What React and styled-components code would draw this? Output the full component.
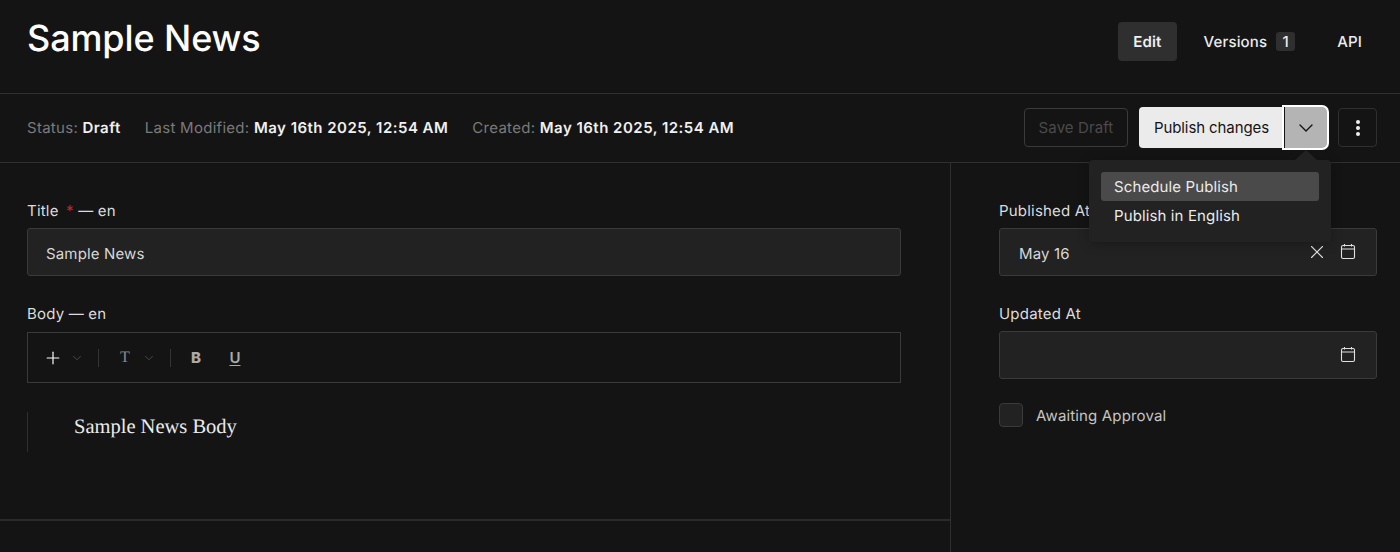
import React from "react";
import styled, { createGlobalStyle } from "styled-components";
import { Plus, ChevronDown, X } from "lucide-react";

const Global = createGlobalStyle`
  html, body { margin: 0; padding: 0; background: #141414; }
  body { font-family: Inter, "Liberation Sans", sans-serif; color: #fff; -webkit-font-smoothing: antialiased; text-rendering: geometricPrecision; }
  * { box-sizing: border-box; }
`;

const Page = styled.div`
  width: 1400px;
  height: 552px;
  overflow: hidden;
  background: #141414;
  display: flex;
  flex-direction: column;
`;

const Header = styled.header`
  height: 94px;
  flex: none;
  border-bottom: 1px solid #2f2f2f;
  padding: 16px 23px 0 27px;
  display: flex;
  justify-content: space-between;
  align-items: flex-start;
`;

const PageTitle = styled.h1`
  margin: 0;
  font-size: 36px;
  line-height: 45px;
  font-weight: 500;
  color: #fff;
  letter-spacing: -0.1px;
`;

const Tabs = styled.nav`
  display: flex;
  align-items: center;
  gap: 12px;
  margin-top: 6px;
`;

const Tab = styled.div`
  height: 39px;
  padding: 0 15px;
  display: flex;
  align-items: center;
  gap: 9px;
  font-size: 15px;
  letter-spacing: 0.15px;
  font-weight: ${(p) => (p.$active ? 600 : 500)};
  border-radius: 4px;
  color: ${(p) => (p.$active ? "#f0f0f0" : "#ebebeb")};
  background: ${(p) => (p.$active ? "#2f2f2f" : "transparent")};
`;

const Count = styled.span`
  width: 19px;
  height: 19px;
  border-radius: 3px;
  background: #2f2f2f;
  display: flex;
  align-items: center;
  justify-content: center;
  font-size: 15px;
`;

const MetaBar = styled.div`
  height: 69px;
  flex: none;
  border-bottom: 1px solid #2f2f2f;
  padding: 0 23px 1px 27px;
  display: flex;
  justify-content: space-between;
  align-items: center;
`;

const MetaList = styled.div`
  display: flex;
  gap: 24px;
  font-size: 15px;
  letter-spacing: 0.28px;
`;

const MetaItem = styled.div`
  color: #7a7a7a;
  b { color: #f0f0f0; font-weight: 600; letter-spacing: 0.48px; }
`;

const Actions = styled.div`
  position: relative;
  display: flex;
  align-items: center;
`;

const SaveButton = styled.button`
  width: 104px;
  height: 39px;
  background: transparent;
  border: 1px solid #3a3a3a;
  border-radius: 4px;
  color: #4a4a4a;
  font: 400 15px Inter, sans-serif;
  letter-spacing: 0.1px;
  margin-right: 11px;
  padding: 0;
`;

const PublishButton = styled.button`
  width: 145px;
  height: 41px;
  background: #ebebeb;
  color: #141414;
  border: 0;
  border-radius: 4px 0 0 4px;
  font: 400 15px Inter, sans-serif;
  letter-spacing: -0.1px;
  padding: 0;
`;

const Caret = styled.button`
  width: 43px;
  height: 41px;
  background: #b4b4b4;
  color: #141414;
  border: 0;
  border-left: 1px solid #141414;
  border-radius: 0 5px 5px 0;
  box-shadow: 0 0 0 2px #fff;
  display: flex;
  align-items: center;
  justify-content: center;
  padding: 0;
  position: relative;
  z-index: 1;
`;

const MoreButton = styled.button`
  width: 39px;
  height: 39px;
  margin-left: 11px;
  background: transparent;
  border: 1px solid #2f2f2f;
  border-radius: 4px;
  display: flex;
  align-items: center;
  justify-content: center;
  flex-direction: column;
  gap: 2px;
  padding: 0;
`;

const Dot = styled.span`
  width: 4px;
  height: 4px;
  border-radius: 50%;
  background: #f0f0f0;
`;

const Popup = styled.div`
  position: absolute;
  top: 53px;
  left: 65px;
  width: 242px;
  height: 82px;
  background: #222;
  border-radius: 4px;
  padding: 12px;
  z-index: 5;
  box-shadow: 0 2px 12px rgba(0,0,0,0.25);
  &::before {
    content: "";
    position: absolute;
    top: -10px;
    left: 206px;
    border: 11px solid transparent;
    border-top: 0;
    border-bottom: 10px solid #222;
  }
`;

const PopupItem = styled.div`
  height: 29px;
  padding: 0 13px;
  display: flex;
  align-items: center;
  font-size: 15px;
  letter-spacing: 0.12px;
  color: #ebebeb;
  border-radius: 3px;
  background: ${(p) => (p.$active ? "#4a4a4a" : "transparent")};
`;

const Main = styled.main`
  flex: 1;
  display: grid;
  grid-template-columns: 951px 1fr;
  min-height: 0;
`;

const LeftPane = styled.section`
  border-right: 1px solid #2f2f2f;
  padding-top: 38px;
  display: flex;
  flex-direction: column;
`;

const LeftFields = styled.div`
  padding: 0 49px 0 27px;
  height: 320px;
  border-bottom: 2px solid #2a2a2a;
`;

const RightPane = styled.aside`
  padding: 38px 23px 0 48px;
`;

const Field = styled.div`
  margin-bottom: ${(p) => p.$mb ?? 28}px;
`;

const Label = styled.label`
  display: block;
  height: 20px;
  line-height: 20px;
  font-size: 15px;
  letter-spacing: 0.2px;
  color: #dcdcdc;
  margin-bottom: ${(p) => p.$mb ?? 7}px;
  em { color: #c0282d; font-style: normal; margin: 0 0 0 3px; }
`;

const Input = styled.div`
  height: 48px;
  background: #222;
  border: 1px solid #3a3a3a;
  border-radius: 3px;
  padding: 0 20px 0 ${(p) => p.$pl ?? 19}px;
  display: flex;
  align-items: center;
  justify-content: space-between;
  font-size: 15px;
  letter-spacing: 0.15px;
  color: #d8d8d8;
`;

const InputValue = styled.span`
  padding-top: 2px;
`;

const InputIcons = styled.div`
  display: flex;
  align-items: center;
  gap: 12px;
  margin-left: auto;
  color: #e0e0e0;
  padding-bottom: 1px;
`;

const Toolbar = styled.div`
  height: 51px;
  border: 1px solid #3a3a3a;
  display: flex;
  align-items: center;
  padding-left: 15px;
`;

const ToolGroup = styled.div`
  display: flex;
  align-items: center;
  gap: ${(p) => p.$gap ?? 7}px;
`;

const Separator = styled.span`
  width: 1px;
  height: 18px;
  background: #333;
  margin: 0 ${(p) => p.$r}px 0 14px;
`;

const SerifT = styled.span`
  font-family: "Liberation Serif", serif;
  font-size: 16px;
  color: #8a8a8a;
  width: 12px;
  text-align: center;
`;

const MarkText = styled.span`
  width: 16px;
  text-align: center;
  font-size: 15px;
  font-weight: ${(p) => (p.$underline ? 600 : 800)};
  color: #aaa;
  text-decoration: ${(p) => (p.$underline ? "underline" : "none")};
  text-underline-offset: 2px;
`;

const Editor = styled.div`
  margin-top: 29px;
  height: 40px;
  border-left: 1px solid #2f2f2f;
  padding: 3px 0 0 46px;
  font-family: "Liberation Serif", serif;
  font-size: 20.5px;
  line-height: 24px;
  color: #ebebeb;
`;

const CheckRow = styled.div`
  display: flex;
  align-items: center;
  gap: 13px;
  font-size: 15px;
  letter-spacing: 0.15px;
  color: #c4c4c4;
  margin-top: 24px;
`;

const CheckText = styled.span`
  padding-top: 1px;
`;

const Check = styled.span`
  width: 24px;
  height: 24px;
  background: #222;
  border: 1px solid #3a3a3a;
  border-radius: 4px;
`;

const CalIcon = () => (
  <svg width="16" height="17" viewBox="0 0 16 17" fill="none" stroke="currentColor" strokeWidth="1.1">
    <rect x="1.5" y="2.5" width="13" height="13" rx="1.5" />
    <path d="M1.5 6h13M4.5 1v2.5M11.5 1v2.5" />
  </svg>
);

const Chevron = () => <ChevronDown size={14} strokeWidth={1.5} color="#4f4f4f" />;

export default function App() {
  return (
    <Page>
      <Global />
      <Header>
        <PageTitle>Sample News</PageTitle>
        <Tabs>
          <Tab $active>Edit</Tab>
          <Tab>Versions <Count>1</Count></Tab>
          <Tab>API</Tab>
        </Tabs>
      </Header>
      <MetaBar>
        <MetaList>
          <MetaItem>Status: <b>Draft</b></MetaItem>
          <MetaItem>Last Modified: <b>May 16th 2025, 12:54 AM</b></MetaItem>
          <MetaItem>Created: <b>May 16th 2025, 12:54 AM</b></MetaItem>
        </MetaList>
        <Actions>
          <SaveButton>Save Draft</SaveButton>
          <PublishButton>Publish changes</PublishButton>
          <Caret><ChevronDown size={24} strokeWidth={1.4} /></Caret>
          <MoreButton><Dot /><Dot /><Dot /></MoreButton>
          <Popup>
            <PopupItem $active>Schedule Publish</PopupItem>
            <PopupItem>Publish in English</PopupItem>
          </Popup>
        </Actions>
      </MetaBar>
      <Main>
        <LeftPane>
          <LeftFields>
            <Field>
              <Label>Title <em>*</em> — en</Label>
              <Input $pl={18}><InputValue>Sample News</InputValue></Input>
            </Field>
            <Field>
              <Label $mb={8}>Body — en</Label>
              <Toolbar>
                <ToolGroup>
                  <Plus size={20} strokeWidth={1.4} color="#fff" />
                  <Chevron />
                </ToolGroup>
                <Separator $r={20} />
                <ToolGroup $gap={11}>
                  <SerifT>T</SerifT>
                  <Chevron />
                </ToolGroup>
                <Separator $r={17} />
                <ToolGroup $gap={23}>
                  <MarkText>B</MarkText>
                  <MarkText $underline>U</MarkText>
                </ToolGroup>
              </Toolbar>
              <Editor>Sample News Body</Editor>
            </Field>
          </LeftFields>
        </LeftPane>
        <RightPane>
          <Field>
            <Label>Published At</Label>
            <Input><InputValue>May 16</InputValue><InputIcons><X size={22} strokeWidth={1.2} /><CalIcon /></InputIcons></Input>
          </Field>
          <Field $mb={0}>
            <Label>Updated At</Label>
            <Input><InputIcons><CalIcon /></InputIcons></Input>
          </Field>
          <CheckRow><Check /><CheckText>Awaiting Approval</CheckText></CheckRow>
        </RightPane>
      </Main>
    </Page>
  );
}
